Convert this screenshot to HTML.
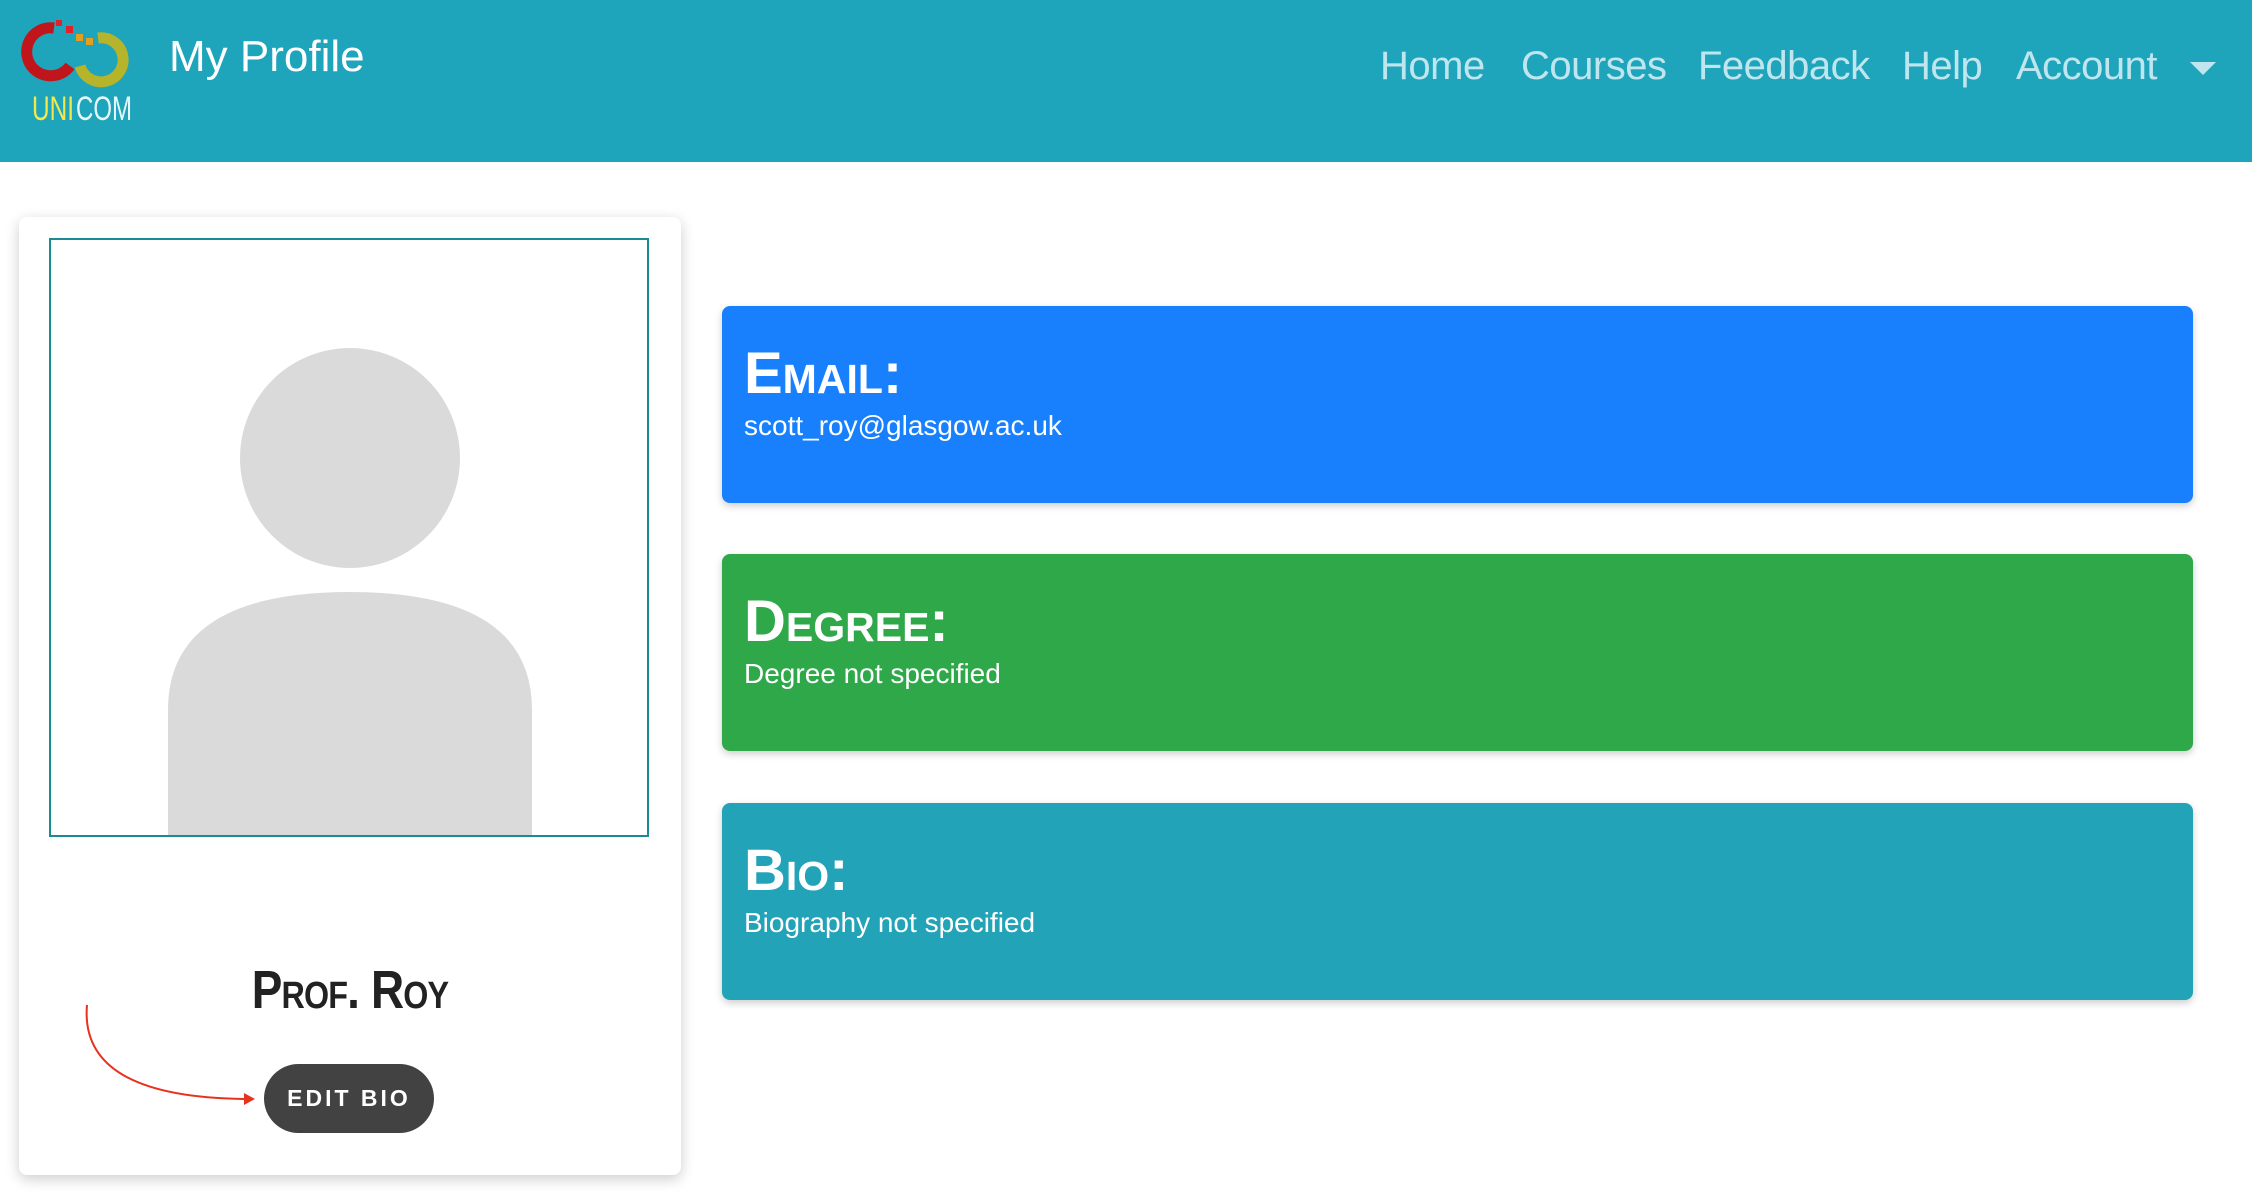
<!DOCTYPE html>
<html><head><meta charset="utf-8"><style>
*{margin:0;padding:0;box-sizing:border-box}
body{width:2252px;height:1202px;background:#fff;font-family:"Liberation Sans",sans-serif;position:relative;overflow:hidden}
.hdr{position:absolute;left:0;top:0;width:2252px;height:162px;background:#1ea4bb}
.title{position:absolute;left:169px;top:32px;color:#fff;font-size:44px}
.nav{position:absolute;top:44px;color:#bfe6ee;font-size:40px;letter-spacing:-0.5px}
.card{position:absolute;left:19px;top:217px;width:662px;height:958px;background:#fff;border-radius:8px;box-shadow:0 4px 14px rgba(0,0,0,.2)}
.img{position:absolute;left:30px;top:21px;width:600px;height:599px;border:2px solid #1a8a93;overflow:hidden;background:#fff}
.name{position:absolute;left:0;width:662px;text-align:center;top:742px;font-size:54px;font-variant:small-caps;color:#222;letter-spacing:-1px;font-weight:bold;transform:scaleX(.85)}
.btn{position:absolute;left:245px;top:847px;width:170px;height:69px;border-radius:35px;background:#424242;color:#fff;font-size:23px;letter-spacing:3px;text-align:center;line-height:69px;font-weight:bold}
.box{position:absolute;left:722px;width:1471px;height:197px;border-radius:8px;color:#fff;box-shadow:0 3px 8px rgba(0,0,0,.2);padding-left:22px}
.box h2{font-size:58px;font-variant:small-caps;font-weight:bold;margin-top:36px;line-height:64px}
.box p{font-size:28px;margin-top:4px}
</style></head><body>
<div class="hdr">
<svg style="position:absolute;left:18px;top:16px" width="120" height="110" viewBox="0 0 120 110">
<path d="M36 12 A24 24 0 1 0 52 50" fill="none" stroke="#c0151b" stroke-width="11"/>
<path d="M80 22 A22 22 0 1 1 62 50" fill="none" stroke="#b5b42a" stroke-width="11"/>
<rect x="38" y="4" width="6" height="6" fill="#e0202a"/><rect x="48" y="10" width="7" height="7" fill="#e0202a"/><rect x="58" y="18" width="7" height="7" fill="#e3a020"/><rect x="68" y="22" width="7" height="7" fill="#e3a020"/>
<text x="14" y="104" font-family="Liberation Sans Narrow,Liberation Sans,sans-serif" font-size="34" fill="#f5e84a" textLength="42" lengthAdjust="spacingAndGlyphs">UNI</text>
<text x="58" y="104" font-family="Liberation Sans Narrow,Liberation Sans,sans-serif" font-size="34" fill="#e6f7fb" textLength="56" lengthAdjust="spacingAndGlyphs">COM</text>
</svg>
<div class="title">My Profile</div>
<div class="nav" style="left:1380px">Home</div>
<div class="nav" style="left:1521px">Courses</div>
<div class="nav" style="left:1698px">Feedback</div>
<div class="nav" style="left:1902px">Help</div>
<div class="nav" style="left:2016px">Account</div>
<div style="position:absolute;left:2190px;top:62px;width:0;height:0;border-left:13px solid transparent;border-right:13px solid transparent;border-top:13px solid #bfe6ee"></div>
</div>
<div class="card">
<div class="img"><svg width="600" height="599"><circle cx="299" cy="218" r="110" fill="#dadada"/><path d="M117 597 L117 470 Q117 352 299 352 Q481 352 481 470 L481 597 Z" fill="#dadada"/></svg></div>
<div class="name">Prof. Roy</div>
<svg style="position:absolute;left:0;top:0" width="662" height="958"><path d="M68 788 Q60 880 225 882" fill="none" stroke="#e8321e" stroke-width="2"/><path d="M225 876 L236 882 L225 888 Z" fill="#e8321e"/></svg>
<div class="btn">EDIT BIO</div>
</div>
<div class="box" style="top:306px;background:#1880fc"><h2>Email:</h2><p>scott_roy@glasgow.ac.uk</p></div>
<div class="box" style="top:554px;background:#2fa84a"><h2>Degree:</h2><p>Degree not specified</p></div>
<div class="box" style="top:803px;background:#23a3b8"><h2>Bio:</h2><p>Biography not specified</p></div>
</body></html>
